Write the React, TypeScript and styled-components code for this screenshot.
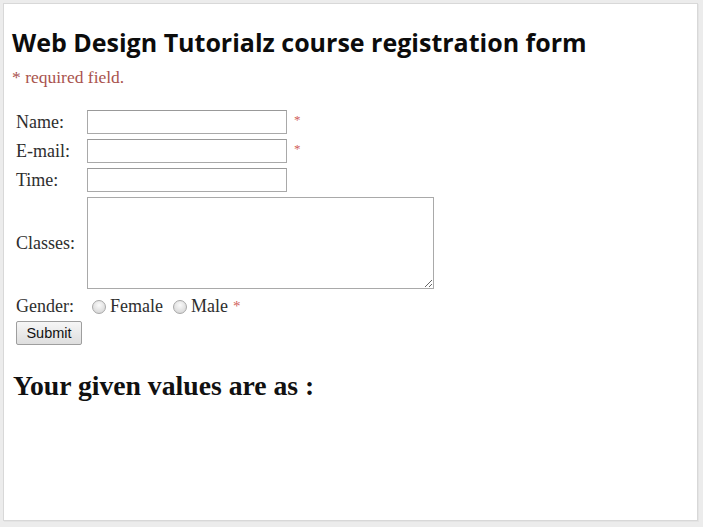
import React from 'react'
import styled, { createGlobalStyle } from 'styled-components'

const GlobalStyle = createGlobalStyle`
  html, body {
    margin: 0;
    padding: 0;
    background: #ececec;
  }
  body {
    width: 703px;
    height: 527px;
    overflow: hidden;
  }
`

const Frame = styled.div`
  box-sizing: border-box;
  margin: 3px 0 0 3px;
  width: 695px;
  height: 518px;
  background: #fff;
  border: 1px solid #d8d8d8;
  box-shadow: 1px 1px 0 #e4e4e4;
  padding: 22px 0 0 8px;
`

const Title = styled.h1`
  margin: 0;
  font-family: 'Open Sans', sans-serif;
  font-weight: 700;
  font-size: 25px;
  line-height: 32px;
  color: #0c0c0c;
`

const Required = styled.p`
  margin: 8px 0 0 0;
  font-family: 'Liberation Serif', serif;
  font-size: 17.5px;
  line-height: 22px;
  color: #a9534d;
`

const Form = styled.form`
  margin-top: 22px;
  padding-left: 4px;
  display: grid;
  grid-template-columns: 71px auto;
  row-gap: 5px;
  font-family: 'Liberation Serif', serif;
  font-size: 18px;
  color: #2e2e2e;
`

const Label = styled.label`
  display: flex;
  align-items: center;
`

const Field = styled.div`
  display: flex;
  align-items: center;
  gap: 7px;
`

const TextInput = styled.input`
  box-sizing: border-box;
  width: 200px;
  height: 24px;
  margin: 0;
  border: 1px solid #a9a9a9;
  border-top-color: #999;
  background: #fff;
`

const TextArea = styled.textarea`
  box-sizing: border-box;
  width: 347px;
  height: 92px;
  margin: 0;
  border: 1px solid #a9a9a9;
  background: #fff;
  resize: both;
`

const Star = styled.span`
  color: #d0605a;
  font-size: 13px;
  align-self: flex-start;
  margin-top: 2px;
`

const RadioGroup = styled.div`
  display: flex;
  align-items: center;
  padding: 2px 0 0 5px;
  gap: 4px;
`

const GenderLabel = styled(Label)`
  padding-top: 2px;
`

const Radio = styled.input`
  appearance: none;
  box-sizing: border-box;
  width: 14px;
  height: 14px;
  margin: 0;
  border-radius: 50%;
  border: 1px solid #a8a8a8;
  background: radial-gradient(circle at 50% 35%, #fafafa 0%, #dcdcdc 70%, #cfcfcf 100%);
`

const RadioText = styled.span<{ $gap?: number }>`
  margin-right: ${p => p.$gap ?? 0}px;
`

const GenderStar = styled.span`
  color: #d0605a;
  font-size: 15px;
  margin-left: 1px;
`

const SubmitButton = styled.button`
  box-sizing: border-box;
  grid-column: 1 / span 2;
  justify-self: start;
  width: 66px;
  height: 24px;
  margin-top: -1px;
  padding: 0;
  border: 1px solid #9e9e9e;
  border-radius: 2px;
  background: linear-gradient(#f6f6f6, #dedede);
  font-family: 'Liberation Sans', Arial, sans-serif;
  font-size: 14.5px;
  color: #111;
`

const Result = styled.h2`
  margin: 25px 0 0 1px;
  font-family: 'Liberation Serif', serif;
  font-weight: 700;
  font-size: 27.7px;
  color: #111;
`

const App = () => {
  return (
    <>
      <GlobalStyle />
      <Frame>
        <Title>Web Design Tutorialz course registration form</Title>
        <Required>* required field.</Required>
        <Form onSubmit={e => e.preventDefault()}>
          <Label>Name:</Label>
          <Field>
            <TextInput type="text" />
            <Star>*</Star>
          </Field>
          <Label>E-mail:</Label>
          <Field>
            <TextInput type="text" />
            <Star>*</Star>
          </Field>
          <Label>Time:</Label>
          <Field>
            <TextInput type="text" />
          </Field>
          <Label>Classes:</Label>
          <Field>
            <TextArea />
          </Field>
          <GenderLabel>Gender:</GenderLabel>
          <RadioGroup>
            <Radio type="radio" name="gender" />
            <RadioText $gap={6}>Female</RadioText>
            <Radio type="radio" name="gender" />
            <RadioText>Male</RadioText>
            <GenderStar>*</GenderStar>
          </RadioGroup>
          <SubmitButton type="submit">Submit</SubmitButton>
        </Form>
        <Result>Your given values are as :</Result>
      </Frame>
    </>
  )
}

export default App
